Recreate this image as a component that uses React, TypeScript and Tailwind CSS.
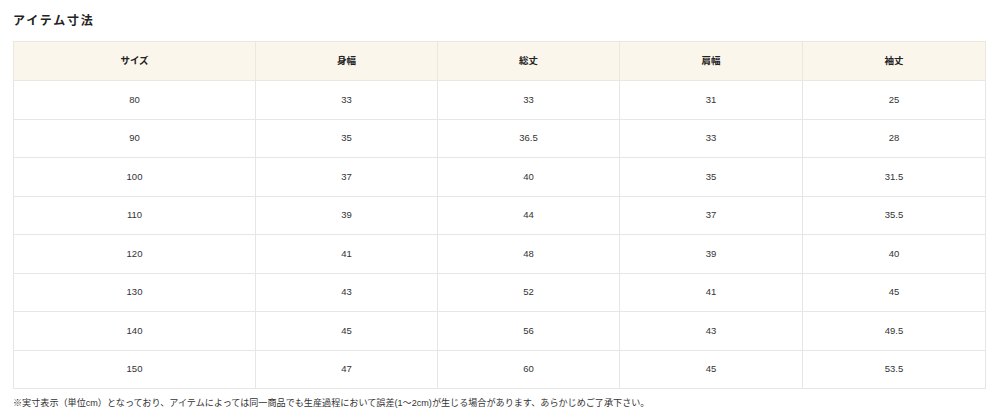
const headers = ["サイズ", "身幅", "総丈", "肩幅", "袖丈"];

const rows = [
  ["80", "33", "33", "31", "25"],
  ["90", "35", "36.5", "33", "28"],
  ["100", "37", "40", "35", "31.5"],
  ["110", "39", "44", "37", "35.5"],
  ["120", "41", "48", "39", "40"],
  ["130", "43", "52", "41", "45"],
  ["140", "45", "56", "43", "49.5"],
  ["150", "47", "60", "45", "53.5"],
];

export default function App() {
  return (
    <div
      className="w-[1000px] h-[416px] bg-white pl-[13px] pr-[15px] pt-[14px] text-[#333]"
      style={{ fontFamily: '"Liberation Sans", "Noto Sans CJK JP", sans-serif' }}
    >
      <h2 className="text-[12px] leading-[14px] font-bold tracking-[0.15em] text-[#222]">
        アイテム寸法
      </h2>

      <table className="mt-[13px] w-[972px] table-fixed border-collapse border border-[#e6e6e6]">
        <colgroup>
          <col className="w-[242px]" />
          <col className="w-[182px]" />
          <col className="w-[182px]" />
          <col className="w-[183px]" />
          <col className="w-[183px]" />
        </colgroup>
        <thead>
          <tr className="h-[39px] bg-[#faf6ec]">
            {headers.map((h) => (
              <th
                key={h}
                className="border border-[#ece8df] text-[9.5px] font-bold text-[#222] text-center"
              >
                {h}
              </th>
            ))}
          </tr>
        </thead>
        <tbody>
          {rows.map((r) => (
            <tr key={r[0]} className="h-[38.5px]">
              {r.map((v, i) => (
                <td
                  key={i}
                  className="border border-[#e6e6e6] text-[9.5px] text-center text-[#333]"
                >
                  {v}
                </td>
              ))}
            </tr>
          ))}
        </tbody>
      </table>

      <p className="mt-[8px] text-[9.1px] leading-[12px] text-[#333]">
        ※実寸表示（単位cm）となっており、アイテムによっては同一商品でも生産過程において誤差(1〜2cm)が生じる場合があります、あらかじめご了承下さい。
      </p>
    </div>
  );
}
